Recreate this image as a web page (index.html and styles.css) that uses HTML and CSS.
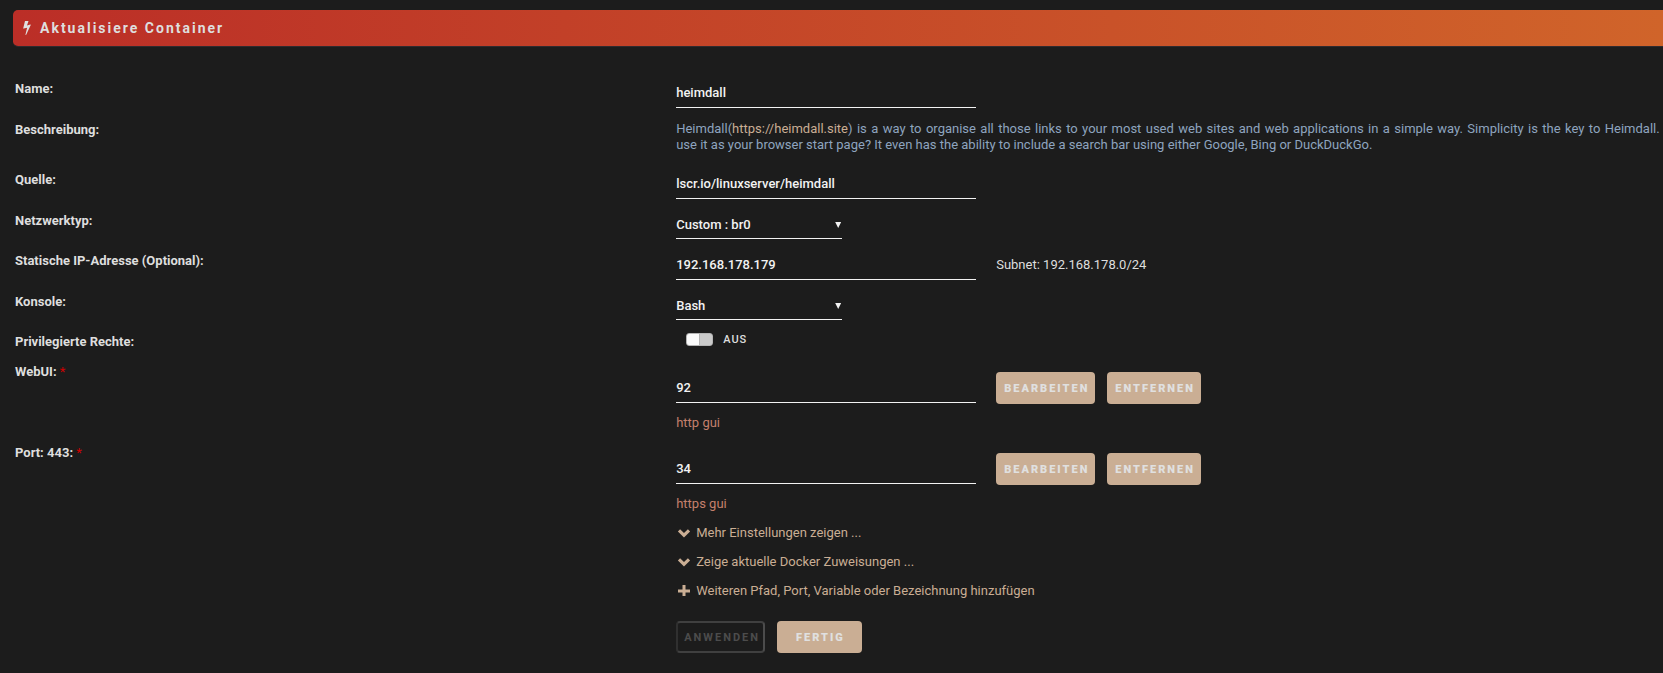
FILE: index.html
```html
<!DOCTYPE html>
<html lang="de">
<head>
<meta charset="utf-8">
<title>Aktualisiere Container</title>
<link rel="stylesheet" href="styles.css">
</head>
<body>
<header class="title-bar">
  <svg class="bolt" viewBox="0 0 896 1664" aria-hidden="true"><path d="M885 438q18 20 7 44l-540 1157q-13 25-42 25-4 0-14-2-17-5-25.500-19t-4.500-30l197-808-406 101q-4 1-12 1-18 0-31-11-18-15-13-39l201-825q4-14 16-23t28-9h328q19 0 32 12.500t13 29.500q0 8-5 18l-171 463 396-98q8-2 12-2 19 0 34 15z"/></svg>
  <h1 class="title">Aktualisiere Container</h1>
</header>
<form class="settings">
  <div class="row">
    <label class="name" for="name">Name:</label>
    <div class="value"><input class="input" id="name" type="text" value="heimdall"></div>
  </div>
  <div class="row">
    <div class="name">Beschreibung:</div>
    <p class="description">Heimdall(<a class="link" href="https://heimdall.site">https://heimdall.site</a>) is a way to organise all those links to your most used web sites and web applications in a simple way. Simplicity is the key to Heimdall. Why not use&nbsp;it&nbsp;as your browser start page? It even has the ability to include a search bar using either Google, Bing or DuckDuckGo.</p>
  </div>
  <div class="row">
    <label class="name" for="source">Quelle:</label>
    <div class="value"><input class="input" id="source" type="text" value="lscr.io/linuxserver/heimdall"></div>
  </div>
  <div class="row">
    <label class="name" for="network">Netzwerktyp:</label>
    <div class="value"><span class="select-box"><select class="select" id="network"><option>Custom : br0</option></select></span></div>
  </div>
  <div class="row">
    <label class="name" for="ip">Statische IP-Adresse (Optional):</label>
    <div class="value"><input class="input" id="ip" type="text" value="192.168.178.179"><span class="hint">Subnet: 192.168.178.0/24</span></div>
  </div>
  <div class="row">
    <label class="name" for="console">Konsole:</label>
    <div class="value"><span class="select-box"><select class="select" id="console"><option>Bash</option></select></span></div>
  </div>
  <div class="row">
    <label class="name" for="privileged">Privilegierte Rechte:</label>
    <div class="value toggle-line"><input class="toggle" id="privileged" type="checkbox"><span class="toggle-text">AUS</span></div>
  </div>
  <div class="row">
    <label class="name" for="webui">WebUI: <span class="required">*</span></label>
    <div class="port">
      <div class="port-line"><input class="input" id="webui" type="text" value="92"><button class="button" type="button">Bearbeiten</button><button class="button" type="button">Entfernen</button></div>
      <p class="note">http gui</p>
    </div>
  </div>
  <div class="row">
    <label class="name" for="port443">Port: 443: <span class="required">*</span></label>
    <div class="port">
      <div class="port-line"><input class="input" id="port443" type="text" value="34"><button class="button" type="button">Bearbeiten</button><button class="button" type="button">Entfernen</button></div>
      <p class="note">https gui</p>
    </div>
  </div>
  <div class="row">
    <div class="actions">
      <a class="link action" href="#more"><svg class="icon" viewBox="0 0 14 14" aria-hidden="true"><path d="M3.100 3.200 7 7.100l3.900-3.900 2.200 2.200L7 11.500.900 5.400z"/></svg>Mehr Einstellungen zeigen ...</a>
      <a class="link action" href="#mappings"><svg class="icon" viewBox="0 0 14 14" aria-hidden="true"><path d="M3.100 3.200 7 7.100l3.900-3.900 2.200 2.200L7 11.500.900 5.400z"/></svg>Zeige aktuelle Docker Zuweisungen ...</a>
      <a class="link action" href="#add"><svg class="icon" viewBox="0 0 14 14" aria-hidden="true"><path d="M5.500 1h3v4.500H13v3H8.500V12h-3V8.500H1v-3h4.500z"/></svg>Weiteren Pfad, Port, Variable oder Bezeichnung hinzufügen</a>
      <div class="submit-line"><button class="button disabled" type="submit" disabled>Anwenden</button><button class="button done" type="button">Fertig</button></div>
    </div>
  </div>
</form>
</body>
</html>
```
FILE: styles.css
```css
* { box-sizing: border-box; }

body {
  margin: 0;
  padding: 10px 0 16px;
  background: #1c1c1c;
  color: #dedede;
  font: 13px/18px Roboto, "Noto Sans", sans-serif;
  overflow: hidden;
}

input, select, button { font: inherit; color: inherit; }
p, h1 { margin: 0; }

.title-bar {
  display: flex;
  align-items: center;
  gap: 9px;
  height: 37px;
  margin-left: 13px;
  padding-left: 10px;
  border-bottom: 1px solid #2f2a2e;
  border-radius: 5px 0 0 5px;
  background: linear-gradient(90deg, #bb2e27, #d0642a) padding-box;
}
.bolt { width: 8px; height: 14px; fill: #e0e0e0; }
.title { font-size: 14px; font-weight: 700; letter-spacing: 2px; }

.settings { padding: 33px 0 0 15px; }

.row {
  display: grid;
  grid-template-columns: 40% minmax(0, 1fr);
  column-gap: 2px;
}
.name { font-weight: 700; }

.value { display: flex; margin-bottom: 13px; }

.input {
  width: 300px;
  height: 28px;
  padding: 0 0 3px;
  border: 0;
  border-bottom: 1px solid #f2f2f2;
  background: transparent;
  color: #f2f2f2;
  font-weight: 500;
}
.hint { margin-left: 20px; line-height: 26px; }

.select-box { position: relative; }
.select-box::after {
  content: "";
  position: absolute;
  right: 1px;
  top: 10px;
  width: 6px;
  height: 6px;
  background: #f2f2f2;
  clip-path: polygon(0 0, 100% 0, 50% 100%);
}
.select {
  display: block;
  appearance: none;
  width: 166px;
  height: 27px;
  padding: 0 0 1px;
  border: 0;
  border-bottom: 1px solid #f2f2f2;
  border-radius: 0;
  background: transparent;
  color: #f2f2f2;
  font-weight: 500;
}

.link { color: #caae94; text-decoration: none; }

.description {
  width: 1036px;
  margin-bottom: 18px;
  color: #8ea4bf;
  line-height: 16px;
  text-align: justify;
}

.toggle-line { align-items: center; margin: 0 0 12px 10px; height: 18px; }
.toggle {
  appearance: none;
  width: 27px;
  height: 13px;
  margin: 0 10px 5px 0;
  border: 1px solid #b4b4b4;
  border-radius: 3px;
  background: linear-gradient(90deg, #fafafa 12px, #b4b4b4 12px 13px, #cacaca 13px);
}
.toggle-text { margin-bottom: 4px; font-size: 11px; font-weight: 500; letter-spacing: 1px; }

.required { color: #d00000; font-weight: 400; }

.port { padding: 9px 0 12px; }
.port-line { display: flex; align-items: center; gap: 12px; }
.port-line .input { margin: 2px 8px 0 0; }
.note { margin-top: 10px; color: #c4806c; }

.button {
  height: 32px;
  padding: 1px 6px 0 8px;
  border: 0;
  border-radius: 4px;
  background: #caae94;
  color: #e0e0e0;
  font-size: 11px;
  font-weight: 900;
  letter-spacing: 2px;
  text-transform: uppercase;
}
.button.disabled {
  border: 2px solid;
  border-color: #404040 #4c4c4c #404040 #303030;
  background: transparent;
  color: #4c4c4c;
  font-weight: 700;
  padding: 1px 3px 0 6px;
}
.button.done { padding: 1px 17px 0 19px; }

.actions { grid-column: 2; }
.action {
  display: flex;
  align-items: center;
  gap: 5px;
  width: fit-content;
  margin-bottom: 13px;
  line-height: 16px;
}
.icon { width: 14px; height: 14px; margin-left: 1px; fill: #caae94; }
.submit-line { display: flex; gap: 12px; margin-top: 22px; }
```
